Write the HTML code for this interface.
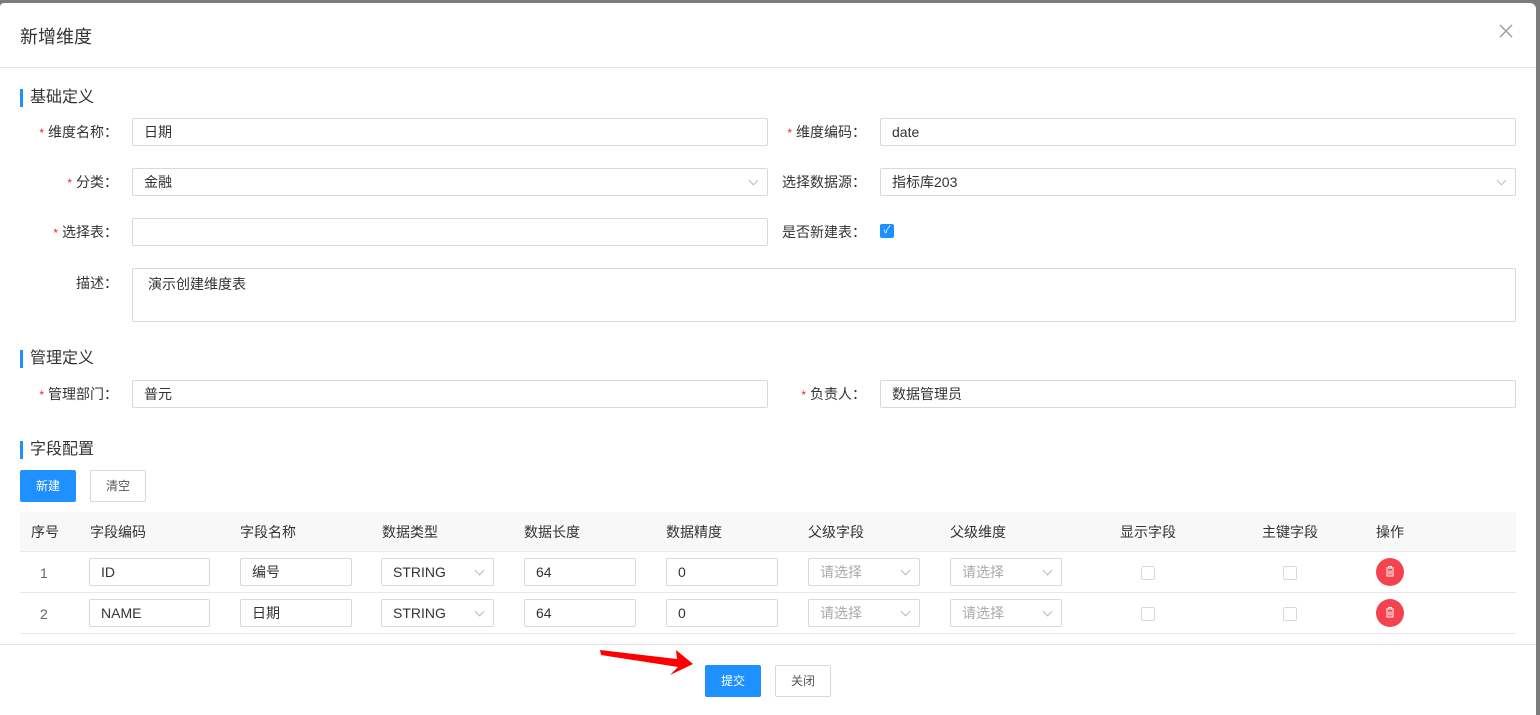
<!DOCTYPE html>
<html><head><meta charset="utf-8"><style>
*{box-sizing:border-box;margin:0;padding:0}
body{width:1540px;height:715px;background:#7b7b7b;font-family:"Liberation Sans","Noto Sans CJK SC",sans-serif;font-size:14px;color:#333;position:relative;overflow:hidden}
.modal{position:absolute;left:0;top:3px;width:1536px;height:712px;background:#fff;border-radius:4px 6px 0 0}
.a{position:absolute}
.title{left:20px;top:20px;font-size:18px;color:#333}
.hr{left:0;width:1536px;height:1px;background:#e4e4e4}
.sec{left:20px;font-size:16px;color:#333;padding-left:7px;border-left:3px solid #1e90ff;line-height:18px}
.lbl{text-align:right;width:118px;line-height:28px;font-size:14px;color:#333}
.lbl b{color:#f5222d;font-weight:normal;margin-right:4px;font-size:12px}
.inp{border:1px solid #d9d9d9;border-radius:2px;height:28px;line-height:26px;padding-left:11px;font-size:14px;color:#333;background:#fff}
.chev{position:absolute;right:10px;top:8px;width:7px;height:7px;border-right:1px solid #bbb;border-bottom:1px solid #bbb;transform:rotate(45deg)}
.btn{height:32px;line-height:30px;text-align:center;font-size:12px;border:1px solid #d9d9d9;border-radius:2px;color:#555;background:#fff}
.pri{background:#1e90ff;border-color:#1e90ff;color:#fff}
.th{font-size:14px;color:#333;line-height:40px}
.cb{width:14px;height:14px;border:1px solid #d9d9d9;border-radius:2px;background:#fff}
.del{width:28px;height:28px;border-radius:50%;background:#f5424f}
.ph{color:#aaa}
</style></head><body>
<div class="modal">
<div class="a title">新增维度</div>
<svg class="a" style="left:1499px;top:21px" width="14" height="14"><path d="M1 1L13 13M13 1L1 13" stroke="#999" stroke-width="1.3"/></svg>
<div class="a hr" style="top:64px"></div>

<div class="a sec" style="top:86px">基础定义</div>
<div class="a lbl" style="left:0;top:115px"><b>*</b>维度名称：</div>
<div class="a inp" style="left:132px;top:115px;width:636px">日期</div>
<div class="a lbl" style="left:748px;top:115px"><b>*</b>维度编码：</div>
<div class="a inp" style="left:880px;top:115px;width:636px">date</div>

<div class="a lbl" style="left:0;top:165px"><b>*</b>分类：</div>
<div class="a inp" style="left:132px;top:165px;width:636px">金融<span class="chev"></span></div>
<div class="a lbl" style="left:748px;top:165px">选择数据源：</div>
<div class="a inp" style="left:880px;top:165px;width:636px">指标库203<span class="chev"></span></div>

<div class="a lbl" style="left:0;top:215px"><b>*</b>选择表：</div>
<div class="a inp" style="left:132px;top:215px;width:636px"></div>
<div class="a lbl" style="left:748px;top:215px">是否新建表：</div>
<div class="a" style="left:880px;top:221px;width:14px;height:14px;background:#1e90ff;border-radius:2px;color:#fff;font-size:10px;line-height:14px;text-align:center">✓</div>

<div class="a lbl" style="left:0;top:265px;line-height:30px">描述：</div>
<div class="a inp" style="left:132px;top:265px;width:1384px;height:54px;line-height:30px;padding-left:15px">演示创建维度表</div>

<div class="a sec" style="top:347px">管理定义</div>
<div class="a lbl" style="left:0;top:377px"><b>*</b>管理部门：</div>
<div class="a inp" style="left:132px;top:377px;width:636px">普元</div>
<div class="a lbl" style="left:748px;top:377px"><b>*</b>负责人：</div>
<div class="a inp" style="left:880px;top:377px;width:636px">数据管理员</div>

<div class="a sec" style="top:438px">字段配置</div>
<div class="a btn pri" style="left:20px;top:467px;width:56px">新建</div>
<div class="a btn" style="left:90px;top:467px;width:56px">清空</div>

<div class="a" style="left:20px;top:509px;width:1496px;height:40px;background:#f8f8f8;border-bottom:1px solid #e8e8e8"></div>
<div class="a th" style="left:31px;top:509px">序号</div>
<div class="a th" style="left:90px;top:509px">字段编码</div>
<div class="a th" style="left:240px;top:509px">字段名称</div>
<div class="a th" style="left:382px;top:509px">数据类型</div>
<div class="a th" style="left:524px;top:509px">数据长度</div>
<div class="a th" style="left:666px;top:509px">数据精度</div>
<div class="a th" style="left:808px;top:509px">父级字段</div>
<div class="a th" style="left:950px;top:509px">父级维度</div>
<div class="a th" style="left:1120px;top:509px">显示字段</div>
<div class="a th" style="left:1262px;top:509px">主键字段</div>
<div class="a th" style="left:1376px;top:509px">操作</div>

<div class="a" style="left:20px;top:589px;width:1496px;height:1px;background:#e8e8e8"></div>
<div class="a" style="left:20px;top:630px;width:1496px;height:1px;background:#e8e8e8"></div>

<div class="a" style="left:40px;top:562px;color:#666">1</div>
<div class="a inp" style="left:89px;top:555px;width:121px">ID</div>
<div class="a inp" style="left:240px;top:555px;width:112px">编号</div>
<div class="a inp" style="left:381px;top:555px;width:113px">STRING<span class="chev"></span></div>
<div class="a inp" style="left:524px;top:555px;width:112px">64</div>
<div class="a inp" style="left:666px;top:555px;width:112px">0</div>
<div class="a inp ph" style="left:808px;top:555px;width:112px">请选择<span class="chev"></span></div>
<div class="a inp ph" style="left:950px;top:555px;width:112px">请选择<span class="chev"></span></div>
<div class="a cb" style="left:1141px;top:563px"></div>
<div class="a cb" style="left:1283px;top:563px"></div>
<div class="a del" style="left:1376px;top:555px"><svg width="28" height="28"><path d="M10 10h8M12.5 10v-1.5h3V10M11 11v7h6v-7M13 12.5v4M15 12.5v4" stroke="#fff" stroke-width="1" fill="none"/></svg></div>

<div class="a" style="left:40px;top:603px;color:#666">2</div>
<div class="a inp" style="left:89px;top:596px;width:121px">NAME</div>
<div class="a inp" style="left:240px;top:596px;width:112px">日期</div>
<div class="a inp" style="left:381px;top:596px;width:113px">STRING<span class="chev"></span></div>
<div class="a inp" style="left:524px;top:596px;width:112px">64</div>
<div class="a inp" style="left:666px;top:596px;width:112px">0</div>
<div class="a inp ph" style="left:808px;top:596px;width:112px">请选择<span class="chev"></span></div>
<div class="a inp ph" style="left:950px;top:596px;width:112px">请选择<span class="chev"></span></div>
<div class="a cb" style="left:1141px;top:604px"></div>
<div class="a cb" style="left:1283px;top:604px"></div>
<div class="a del" style="left:1376px;top:596px"><svg width="28" height="28"><path d="M10 10h8M12.5 10v-1.5h3V10M11 11v7h6v-7M13 12.5v4M15 12.5v4" stroke="#fff" stroke-width="1" fill="none"/></svg></div>

<div class="a hr" style="top:641px"></div>
<div class="a btn pri" style="left:705px;top:662px;width:56px">提交</div>
<div class="a btn" style="left:775px;top:662px;width:56px">关闭</div>
</div>
<svg class="a" style="left:0;top:0" width="1540" height="715"><polygon points="600,650 601,655 678,667 670,675 693,664 676,650 677,659" fill="#f00"/></svg>
</body></html>
